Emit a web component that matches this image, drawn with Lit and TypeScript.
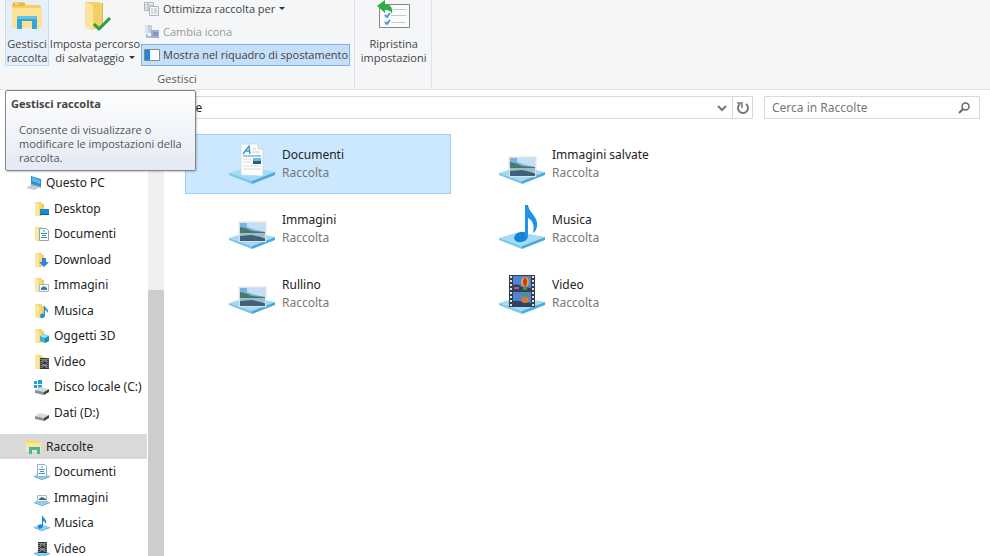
import { LitElement, html, css, svg, nothing } from "lit";
import { customElement, property } from "lit/decorators.js";
import { classMap } from "lit/directives/class-map.js";

const folder = svg`
  <path d="M1 1h7v14H3l-2-1z" fill="#f7d775"/>
  <path d="M1 1l4 2v12l-4-1z" fill="#fbe6a2"/>
  <path d="M8 3h2v11H8z" fill="#efc65c"/>`;

const tray = svg`
  <path d="M0 12l6-3 10 3-8 3z" fill="#8fd0f0"/>
  <path d="M0 12l8 3 8-3v1l-8 3-8-3z" fill="#4aa9d8"/>`;

const drive = svg`
  <path d="M1 10l5-3 9 2-5 3z" fill="#d9dadb"/>
  <path d="M1 10l9 2v3l-9-2z" fill="#8b8d8f"/>
  <path d="M10 12l5-3v3l-5 3z" fill="#3f4143"/>`;

const film = svg`
  <rect x="6" y="4" width="9" height="11" fill="#33363a"/>
  <path d="M8 5h5v4H8zM8 10h5v4H8z" fill="#7d858c"/>
  <path d="M10 6l3 3H9zM10 12l3 2H8z" fill="#4a3f33"/>
  <path d="M7 5v10M14 5v10" stroke="#d8dadc" stroke-width=".8" stroke-dasharray="1 1"/>`;

const smallIcons: Record<string, unknown> = {
  pc: svg`
    <path d="M5 1l10 3v8L5 9z" fill="#2d8fd2"/>
    <path d="M6 2l8 3v4L6 6z" fill="#5db4ea"/>
    <path d="M0 13l5-3 8 3-5 2z" fill="#c5cdd4"/>
    <path d="M5 9l10 3v1L5 10z" fill="#7d98ab"/>`,
  desktop: svg`${folder}<rect x="6" y="8" width="9" height="6" fill="#1588d3"/><path d="M6 13h9v1H6z" fill="#0b5c9c"/>`,
  documents: svg`${folder}<path d="M5.500 2.500h7l2 2v10h-9z" fill="#fff" stroke="#8fa3b0"/><path d="M10 4v2M7 7.500h6M8 9.500h4M7 11.500h6" stroke="#2f9bb8"/>`,
  download: svg`${folder}<path d="M8 6h4v4h3l-5 5-5-5h3z" fill="#2c85d8"/>`,
  pictures: svg`${folder}<path d="M5.500 7.500h9v7h-9z" fill="#f4f7f9" stroke="#a9b5bd"/><path d="M7 11l3-2 3 2v2H7z" fill="#3f7fa6"/>`,
  music: svg`${folder}<path d="M10 2c1 3 5 4 4 8-1-2-2-2-3-3v5c0 4-5 4-5 1 0-2 2-3 4-2z" fill="#1e90dc"/>`,
  objects: svg`${folder}<path d="M6 8l5-2 4 2v5l-4 2-5-2z" fill="#31b3d8"/><path d="M6 8l5-2 4 2-4 2z" fill="#9be2f3"/><path d="M11 10l4-2v5l-4 2z" fill="#168fb8"/>`,
  video: svg`${folder}${film}`,
  system: svg`<path d="M0 2h3v3H0zM4 1h4v4H4zM0 6h3v3H0zM4 6h4v3H4z" fill="#17a7dc"/><g transform="translate(0 1)">${drive}</g>`,
  drive: svg`<g transform="translate(0 1)">${drive}</g>`,
  libraries: svg`
    <path d="M0 2l1-1h5l1 1h8v11H0z" fill="#f7d877"/>
    <path d="M0 4h15v9H0z" fill="#fbe69e"/>
    <path d="M3 15V8h11v7h-3v-4H6v4z" fill="#45b5a9"/>`,
  libDocuments: svg`${tray}<path d="M3.500.5h7l2 2v10h-9z" fill="#fff" stroke="#8db3c8"/><path d="M8 2v2M5 5.500h6M6 7.500h4M5 9.500h6" stroke="#3b9cbd"/>`,
  libPictures: svg`${tray}<path d="M3.500 5.500h9v6h-9z" fill="#f2f6f8" stroke="#a9bac4"/><path d="M5 9l3-2 4 2v1H5z" fill="#2f6280"/>`,
  libMusic: svg`${tray}<path d="M8 0c1 3 5 4 4 9-1-2-2-3-3-3v5c0 3-5 4-5 1 0-2 2-3 4-2z" fill="#1687dc"/>`,
  libVideo: svg`${tray}<g transform="translate(-2 -3)">${film}</g>`,
};

const bigTray = svg`
  <path d="M0 34l20-6 26 5-23 9z" fill="#a3daf6"/>
  <path d="M0 34l23 8v3L0 36z" fill="#79c6ec"/>
  <path d="M23 42l23-9v3l-23 9z" fill="#48abdc"/>`;

const photo = svg`
  <rect x="10" y="18" width="27" height="20" fill="#e9eef0" stroke="#c4cdd2" stroke-width=".6"/>
  <rect x="11" y="19" width="25" height="10" fill="#79b0e6"/>
  <path d="M18 19h18v9q-8-1-18-5z" fill="#c5e0f5"/>
  <path d="M11 23q7 1 12 4l13 1v2H11z" fill="#487c62"/>
  <path d="M11 29h25v4H11z" fill="#9bbfca"/>
  <path d="M11 32l12-1 13 3v3H11z" fill="#42607a"/>`;

const bigIcons: Record<string, unknown> = {
  documents: svg`${bigTray}
    <path d="M12 5h17l5 5v27l-22-1z" fill="#fdfdfd" stroke="#c5d0d6" stroke-width=".6"/>
    <path d="M29 5v5h5" fill="#dfe7eb" stroke="#b9c6ce" stroke-width=".6"/>
    <path d="M14 15l6-8 1 8M16 12h5" fill="none" stroke="#3f97bd" stroke-width="1.4"/>
    <path d="M23 10h4M23 13h8" stroke="#a9c8d6" stroke-width=".8"/>
    <path d="M14 17h18" stroke="#3f97bd"/>
    <rect x="24" y="19" width="8" height="6" fill="#6bbbe0"/>
    <path d="M24 22h8v3h-8z" fill="#285d73"/>
    <path d="M14 20h8M14 23h8M14 27h18M14 30h18" stroke="#cbd1d4" stroke-width=".8"/>`,
  pictures: svg`${bigTray}${photo}`,
  music: svg`${bigTray}
    <ellipse cx="22" cy="33" rx="7" ry="5" transform="rotate(-15 22 33)" fill="#1683db"/>
    <path d="M26 33V1h3c1 8 11 12 9 22-1 3-2 5-4 6 2-9-1-13-5-15v19z" fill="#1d94ea"/>`,
  video: svg`${bigTray}
    <rect x="10" y="6" width="26" height="32" fill="#3a3d42"/>
    <path d="M14 7h18v15H14zM14 23h18v14H14z" fill="#4b86d8"/>
    <path d="M14 16q5-2 9 2l9 1v3H14zM14 32q7-1 18 2v3H14z" fill="#2e4267"/>
    <ellipse cx="26" cy="13" rx="4" ry="5" fill="#e7a52c"/>
    <path d="M26 8q4 5 0 10-4-5 0-10z" fill="#c7362d"/>
    <path d="M24 18h4v3h-4z" fill="#3f8d46"/>
    <path d="M15 18h5v2h-5z" fill="#d4488a"/>
    <ellipse cx="26" cy="31" rx="4" ry="3" fill="#d9792c"/>
    <path d="M22 24h8v2h-8z" fill="#43a04e"/>
    <path d="M12 7v31M34 7v31" stroke="#dfe3e6" stroke-width="2" stroke-dasharray="2 2"/>`,
};

interface TreeNode { label: string; icon: string; root?: boolean; selected?: boolean }
interface Library { name: string; icon: string; selected?: boolean }

const pcNodes: TreeNode[] = [
  { label: "Questo PC", icon: "pc", root: true },
  { label: "Desktop", icon: "desktop" },
  { label: "Documenti", icon: "documents" },
  { label: "Download", icon: "download" },
  { label: "Immagini", icon: "pictures" },
  { label: "Musica", icon: "music" },
  { label: "Oggetti 3D", icon: "objects" },
  { label: "Video", icon: "video" },
  { label: "Disco locale (C:)", icon: "system" },
  { label: "Dati (D:)", icon: "drive" },
];

const libraryNodes: TreeNode[] = [
  { label: "Raccolte", icon: "libraries", root: true, selected: true },
  { label: "Documenti", icon: "libDocuments" },
  { label: "Immagini", icon: "libPictures" },
  { label: "Musica", icon: "libMusic" },
  { label: "Video", icon: "libVideo" },
];

const libraries: Library[] = [
  { name: "Documenti", icon: "documents", selected: true },
  { name: "Immagini salvate", icon: "pictures" },
  { name: "Immagini", icon: "pictures" },
  { name: "Musica", icon: "music" },
  { name: "Rullino", icon: "pictures" },
  { name: "Video", icon: "video" },
];

const reset = css`
  * { box-sizing: border-box; }
  button, input { font: inherit; color: inherit; margin: 0; padding: 0; border: 0; background: none; border-radius: 0; }
  svg { display: block; flex: none; }
`;

@customElement("ribbon-bar")
export class RibbonBar extends LitElement {
  static styles = [reset, css`
    :host { display: flex; background: #f4f6f8; border-bottom: 1px solid #e3e5e8; font-family: "Open Sans", "Noto Sans", sans-serif; font-size: 11px; line-height: 14px; color: #444; }
    .group { display: flex; flex-direction: column; border-right: 1px solid #e0e3e6; }
    .tools { display: flex; height: 66px; padding: 0 4px 0 5px; }
    .caption { text-align: center; padding: 6px 0 3px; color: #5c5c5c; }
    .big { display: flex; flex-direction: column; align-items: center; white-space: nowrap; border: 1px solid transparent; border-top: 0; }
    .big svg { margin-bottom: 4px; }
    .big.hot { width: 44px; background: #e6f0fa; border-color: #c3dbf2; }
    .wide { width: 92px; }
    .reset { width: 67px; }
    .stack { display: flex; flex-direction: column; justify-content: flex-end; }
    .row { display: flex; flex: none; align-items: center; gap: 3px; height: 22px; margin-top: 1px; padding: 0 1px 0 2px; border: 1px solid transparent; white-space: nowrap; }
    .row.on { background: #c5dff8; border-color: #7fb2e2; }
    .row:disabled { color: #999; }
    .arrow { display: inline-block; border: 3px solid transparent; border-top-color: #333; border-bottom: 0; margin-left: 4px; vertical-align: 3px; }
  `];

  render() {
    return html`
      <div class="group">
        <div class="tools">
          <button class="big hot">
            <svg width="34" height="33" viewBox="0 0 34 33">
              <path d="M2 4l2-2h10l2 3h14l1 2v20H2z" fill="#f4cf62"/>
              <path d="M2 8h30v19l-1 1H3l-1-1z" fill="#fbe294"/>
              <rect x="3" y="3" width="12" height="3" rx="1" fill="#e9b53c"/>
              <path d="M5 4h4" stroke="#fff3c5"/>
              <path d="M7 29V16h20v13h-5v-8H12v8z" fill="#35a8d8"/>
              <path d="M7 16h20v3H7z" fill="#62c3e6"/>
            </svg>
            <span>Gestisci<br />raccolta</span>
          </button>
          <button class="big wide">
            <svg width="34" height="33" viewBox="0 0 34 33">
              <path d="M7 2h14l3 2v25H12l-5-3z" fill="#f3cf68"/>
              <path d="M7 2l8 3v26l-8-4z" fill="#fbe49c"/>
              <path d="M24 3h1v22h-1z" fill="#e4b548"/>
              <path d="M16 24l5 5 11-11" fill="none" stroke="#27a043" stroke-width="3"/>
            </svg>
            <span>Imposta percorso<br />di salvataggio<i class="arrow"></i></span>
          </button>
          <div class="stack">
            <button class="row">
              <svg width="16" height="16" viewBox="0 0 16 16" fill="none" stroke="#b1b5b9">
                <path d="M.5 1.500h9v8h-9zM1 4h8M1 7h4M4 2v8"/>
                <path d="M5.500 5.500h9v9h-9z" fill="#f7f8f9"/><path d="M7 8h2M10 8h3M7 10h2M10 10h3M7 12h2M10 12h3"/>
              </svg>
              <span>Ottimizza raccolta per<i class="arrow"></i></span>
            </button>
            <button class="row" disabled>
              <svg width="16" height="16" viewBox="0 0 16 16">
                <path d="M1 1h7v8H1z" fill="#c3cedd"/><path d="M1 1h3v8H1z" fill="#dbe2ec"/>
                <path d="M3 10v3h4" fill="none" stroke="#9aaed0" stroke-width="1.500"/>
                <path d="M7 6h8v8H7z" fill="#a0b2d3"/><path d="M9 8h5v4H9z" fill="#8499c4"/>
              </svg>
              <span>Cambia icona</span>
            </button>
            <button class="row on" aria-pressed="true">
              <svg width="16" height="16" viewBox="0 0 16 16">
                <path d="M.5 2.500h15v11H.5z" fill="#fff" stroke="#7c8a98"/><path d="M1 3h5v10H1z" fill="#1f86dc"/>
              </svg>
              <span>Mostra nel riquadro di spostamento</span>
            </button>
          </div>
        </div>
        <div class="caption">Gestisci</div>
      </div>
      <div class="group">
        <div class="tools">
          <button class="big reset">
            <svg width="36" height="33" viewBox="0 0 36 33">
              <path d="M3.500 4.500h30v23h-30z" fill="#fbfcfc" stroke="#84888c"/>
              <path d="M17 9.500h13M15 15.500h15M15 22.500h15" stroke="#c4c8cb"/>
              <path d="M8 13h5v5H8zM8 20h5v5H8z" fill="#e1edf7"/>
              <path d="M9 15l2 2 3-4M9 22l2 2 3-4" fill="none" stroke="#3d88cc" stroke-width="1.500"/>
              <path d="M1 6l8-6v4c5 0 8 3 7 10-1-3-3-4-7-4v3z" fill="#2fae45"/>
            </svg>
            <span>Ripristina<br />impostazioni</span>
          </button>
        </div>
      </div>`;
  }
}

@customElement("nav-tree")
export class NavTree extends LitElement {
  static styles = [reset, css`
    :host { display: flex; overflow: hidden; color: #222; }
    nav { flex: 1; min-width: 0; padding-top: 44px; }
    .branch { display: grid; grid-auto-rows: 26px 25px; margin: 0 0 9px; padding: 0; list-style: none; }
    .branch.short { grid-auto-rows: 25px 26px; }
    .node { display: flex; width: calc(100% - 1px); height: 100%; align-items: center; gap: 4px; padding-left: 34px; line-height: 14px; color: inherit; text-decoration: none; white-space: nowrap; }
    .node.root { padding-left: 26px; }
    .node.selected { background: #d9d9d9; }
    .track { width: 16px; background: #f0f0f0; display: flex; flex-direction: column; }
    .thumb { flex: 1; margin-top: 164px; background: #cdcdcd; }
  `];

  private branch(nodes: TreeNode[], short: boolean) {
    return html`<ul class=${classMap({ branch: true, short })}>
      ${nodes.map((n) => html`<li>
        <a href="#" class=${classMap({ node: true, root: !!n.root, selected: !!n.selected })}
          aria-current=${n.selected ? "true" : nothing}>
          <svg width="16" height="16" viewBox="0 0 16 16">${smallIcons[n.icon]}</svg>${n.label}
        </a></li>`)}
    </ul>`;
  }

  render() {
    return html`
      <nav aria-label="Riquadro di spostamento">${this.branch(pcNodes, false)}${this.branch(libraryNodes, true)}</nav>
      <div class="track"><div class="thumb"></div></div>`;
  }
}

@customElement("library-tile")
export class LibraryTile extends LitElement {
  @property() name = "";
  @property() icon = "";
  @property({ type: Boolean, reflect: true }) selected = false;

  static styles = [reset, css`
    :host { display: block; }
    .tile { display: flex; align-items: center; gap: 6px; width: 100%; height: 60px; padding-left: 43px; border: 1px solid transparent; text-align: left; line-height: 18px; }
    .tile svg { margin-bottom: 2px; }
    .selected { background: #cce8ff; border-color: #99d1f5; }
    .kind { color: #777; }
  `];

  render() {
    return html`<button class=${classMap({ tile: true, selected: this.selected })} aria-pressed=${this.selected}>
      <svg width="47" height="48" viewBox="0 0 47 48">${bigIcons[this.icon]}</svg>
      <span>${this.name}<br /><span class="kind">Raccolta</span></span>
    </button>`;
  }
}

@customElement("app-root")
export class AppRoot extends LitElement {
  static styles = [reset, css`
    :host { display: flex; flex-direction: column; height: 100vh; overflow: hidden; position: relative; background: #fff; color: #222; font-family: "Noto Sans", "Open Sans", sans-serif; font-size: 12px; }
    .bar { display: flex; gap: 11px; padding: 6px 10px 7px; }
    .address, .search { display: flex; height: 23px; border: 1px solid #d9d9d9; align-items: center; }
    .address { flex: 1; min-width: 0; }
    .address input { flex: 1; min-width: 0; padding-left: 144px; outline: 0; }
    .icon { display: flex; align-items: center; justify-content: center; width: 20px; height: 21px; }
    .refresh { border-left: 1px solid #d9d9d9; }
    .search { width: 216px; padding: 0 5px 0 7px; color: #6d6d6d; }
    .search input { flex: 1; min-width: 0; outline: 0; }
    .search input::placeholder { color: #777; opacity: 1; }
    .body { flex: 1; min-height: 0; display: grid; grid-template-columns: 164px 1fr; }
    .files { display: grid; grid-template-columns: repeat(auto-fill, 266px); align-content: start; gap: 5px 4px; padding: 8px 12px 0 21px; }
    .tip { position: absolute; left: 5px; top: 90px; width: 191px; padding: 6px 5px 5px; border: 1px solid #84868f; border-radius: 2px; background: linear-gradient(#fff, #e4e9f3); box-shadow: 1px 1px 2px #0003; font-family: "Open Sans", "Noto Sans", sans-serif; font-size: 11px; line-height: 14px; color: #555; }
    .tip strong { display: block; color: #444; }
    .tip p { margin: 12px 0 0; padding-left: 8px; }
  `];

  render() {
    return html`
      <ribbon-bar></ribbon-bar>
      <div class="bar">
        <div class="address">
          <input aria-label="Indirizzo" value="Raccolte" />
          <button class="icon" aria-label="Posizioni precedenti">
            <svg width="12" height="12" viewBox="0 0 12 12"><path d="M2 4l4 4 4-4" fill="none" stroke="#777" stroke-width="2"/></svg>
          </button>
          <button class="icon refresh" aria-label="Aggiorna">
            <svg width="14" height="14" viewBox="0 0 14 14"><path d="M10 3a5 5 0 1 1-6 0" fill="none" stroke="#777" stroke-width="2"/><path d="M1 2h5v5" fill="none" stroke="#777" stroke-width="1.500"/></svg>
          </button>
        </div>
        <div class="search">
          <input type="search" aria-label="Cerca in Raccolte" placeholder="Cerca in Raccolte" />
          <button class="icon" aria-label="Cerca">
            <svg width="14" height="14" viewBox="0 0 14 14"><circle cx="8.500" cy="5.500" r="3.500" fill="none" stroke="#666" stroke-width="1.500"/><path d="M6 8l-4 4" stroke="#666" stroke-width="2"/></svg>
          </button>
        </div>
      </div>
      <div class="body">
        <nav-tree></nav-tree>
        <main class="files">
          ${libraries.map((l) => html`<library-tile name=${l.name} icon=${l.icon} ?selected=${l.selected}></library-tile>`)}
        </main>
      </div>
      <div class="tip" role="tooltip">
        <strong>Gestisci raccolta</strong>
        <p>Consente di visualizzare o modificare le impostazioni della raccolta.</p>
      </div>`;
  }
}
